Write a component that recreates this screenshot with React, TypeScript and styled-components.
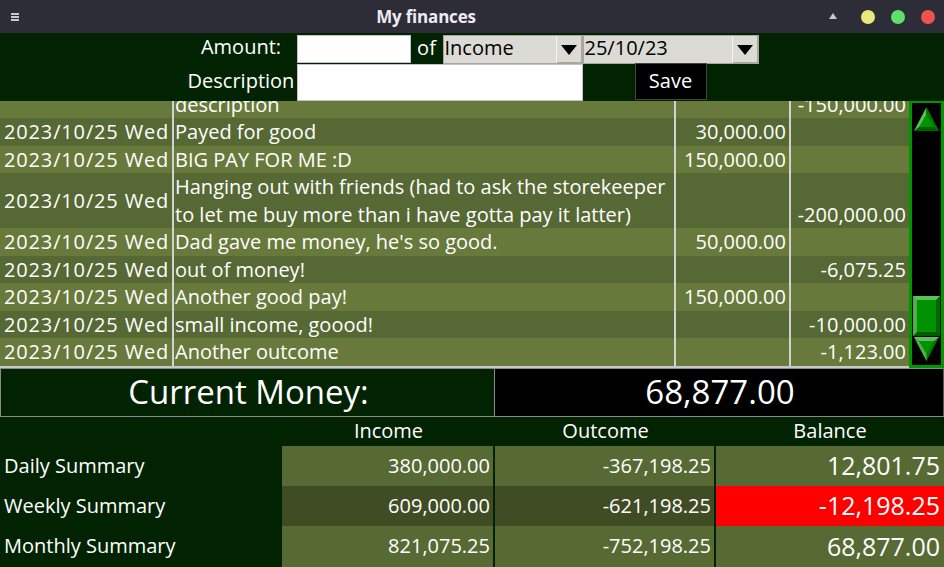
import styled, { createGlobalStyle } from 'styled-components';
import { useLayoutEffect, useRef } from 'react';

interface Entry {
	date: string;
	desc: string;
	income?: string;
	outcome?: string;
}

const entries: Entry[] = [
	{ date: '2023/10/25 Wed', desc: 'Paid the rent of the month, it was a lot so i add a long\ndescription', outcome: '-150,000.00' },
	{ date: '2023/10/25 Wed', desc: 'Payed for good', income: '30,000.00' },
	{ date: '2023/10/25 Wed', desc: 'BIG PAY FOR ME :D', income: '150,000.00' },
	{
		date: '2023/10/25 Wed',
		desc: 'Hanging out with friends (had to ask the storekeeper\nto let me buy more than i have gotta pay it latter)',
		outcome: '-200,000.00',
	},
	{ date: '2023/10/25 Wed', desc: "Dad gave me money, he's so good.", income: '50,000.00' },
	{ date: '2023/10/25 Wed', desc: 'out of money!', outcome: '-6,075.25' },
	{ date: '2023/10/25 Wed', desc: 'Another good pay!', income: '150,000.00' },
	{ date: '2023/10/25 Wed', desc: 'small income, goood!', outcome: '-10,000.00' },
	{ date: '2023/10/25 Wed', desc: 'Another outcome', outcome: '-1,123.00' },
];

const summary = [
	{ label: 'Daily Summary', income: '380,000.00', outcome: '-367,198.25', balance: '12,801.75', dark: false, negative: false },
	{ label: 'Weekly Summary', income: '609,000.00', outcome: '-621,198.25', balance: '-12,198.25', dark: true, negative: true },
	{ label: 'Monthly Summary', income: '821,075.25', outcome: '-752,198.25', balance: '68,877.00', dark: false, negative: false },
];

export default function App() {
	const listRef = useRef<HTMLDivElement>(null);

	useLayoutEffect(() => {
		if (listRef.current) listRef.current.scrollTop = 39;
	}, []);

	return (
		<>
			<GlobalStyle />
			<Window>
				<TitleBar>
					<MenuIcon width="8" height="8" viewBox="0 0 8 8">
						<rect x="0" y="0" width="8" height="2" fill="#c8c8cc" />
						<rect x="0" y="3" width="8" height="2" fill="#c8c8cc" />
						<rect x="0" y="6" width="8" height="2" fill="#c8c8cc" />
					</MenuIcon>
					<Title>My finances</Title>
					<TitleControls>
						<svg width="8" height="6" viewBox="0 0 8 6">
							<polygon points="4,0 8,6 0,6" fill="#c8c8cc" />
						</svg>
						<Light color="#e8e87c" />
						<Light color="#5ee06c" />
						<Light color="#ef5350" />
					</TitleControls>
				</TitleBar>

				<Form>
					<Label>Amount:</Label>
					<TextInput />
					<Of>of</Of>
					<Combo>
						<ComboText>Income</ComboText>
						<ComboArrow>
							<svg width="16" height="10" viewBox="0 0 16 10">
								<polygon points="0,0 16,0 8,10" fill="#000" />
							</svg>
						</ComboArrow>
					</Combo>
					<Combo>
						<ComboText>25/10/23</ComboText>
						<ComboArrow>
							<svg width="16" height="10" viewBox="0 0 16 10">
								<polygon points="0,0 16,0 8,10" fill="#000" />
							</svg>
						</ComboArrow>
					</Combo>
					<DescLabel>Description</DescLabel>
					<DescInput />
					<SaveCell>
						<SaveButton>Save</SaveButton>
					</SaveCell>
				</Form>

				<TableArea>
					<List ref={listRef}>
						{entries.map((e, i) => (
							<Row key={i} light={i % 2 === 0}>
								<DateCell>{e.date}</DateCell>
								<DescCell>{e.desc}</DescCell>
								<AmountCell>{e.income}</AmountCell>
								<AmountCell>{e.outcome}</AmountCell>
							</Row>
						))}
					</List>
					<ScrollBar>
						<svg width="27" height="26" viewBox="0 0 27 26">
							<polygon points="13.5,1 1,25 13.5,19" fill="#5cc05c" />
							<polygon points="13.5,1 26,25 13.5,19" fill="#007a00" />
							<polygon points="13.5,8 6,21 21,21" fill="#009400" />
							<polygon points="1,25 26,25 21,21 6,21" fill="#006000" />
						</svg>
						<Trough>
							<Thumb />
						</Trough>
						<svg width="27" height="26" viewBox="0 0 27 26">
							<polygon points="1,1 26,1 13.5,25" fill="#007a00" />
							<polygon points="1,1 26,1 21,5 6,5" fill="#5cc05c" />
							<polygon points="1,1 13.5,25 13.5,17 6,5" fill="#50b050" />
							<polygon points="6,5 21,5 13.5,18" fill="#009400" />
						</svg>
					</ScrollBar>
				</TableArea>

				<MoneyRow>
					<MoneyLabel>Current Money:</MoneyLabel>
					<MoneyValue>68,877.00</MoneyValue>
				</MoneyRow>

				<Summary>
					<span />
					<HeadCell>Income</HeadCell>
					<HeadCell>Outcome</HeadCell>
					<HeadCell>Balance</HeadCell>
					{summary.map((s) => (
						<SummaryLine key={s.label}>
							<SumLabel>{s.label}</SumLabel>
							<SumCell dark={s.dark}>{s.income}</SumCell>
							<SumCell dark={s.dark}>{s.outcome}</SumCell>
							<BalanceCell dark={s.dark} negative={s.negative}>
								{s.balance}
							</BalanceCell>
						</SummaryLine>
					))}
				</Summary>
			</Window>
		</>
	);
}

const GlobalStyle = createGlobalStyle`
	body {
		margin: 0;
		background: #012301;
		font-family: 'Open Sans', 'Noto Sans', sans-serif;
		color: #fff;
	}
	* {
		box-sizing: border-box;
	}
`;

const Window = styled.div`
	width: 944px;
	height: 567px;
	display: flex;
	flex-direction: column;
	background: #012301;
	overflow: hidden;
`;

const TitleBar = styled.header`
	height: 33px;
	flex: none;
	display: flex;
	align-items: center;
	padding: 0 9px 0 11px;
	background: #2d2d37;
`;

const MenuIcon = styled.svg`
	flex: none;
`;

const Title = styled.h1`
	flex: 1;
	margin: 0 0 0 4px;
	text-align: center;
	font-family: 'Liberation Sans Narrow', 'Open Sans', sans-serif;
	font-size: 17px;
	font-weight: 700;
	letter-spacing: -0.2px;
	color: #ececf0;
`;

const TitleControls = styled.div`
	display: flex;
	align-items: center;
	gap: 16px;
	svg {
		margin-right: 8px;
		margin-top: -2px;
	}
`;

const Light = styled.span<{ color: string }>`
	width: 14px;
	height: 14px;
	border-radius: 50%;
	background: ${({ color }) => color};
`;

const Form = styled.div`
	flex: none;
	height: 68px;
	display: grid;
	grid-template-columns: 113px 114px 32px 140px 176px;
	grid-template-rows: 31px 37px;
	justify-content: center;
	margin-left: -2px;
	font-size: 20px;
`;

const Label = styled.div`
	display: flex;
	align-items: center;
	justify-content: center;
	padding: 0 0 4px 2px;
	line-height: 1;
`;

const DescLabel = styled(Label)`
	padding: 0 0 3px 2px;
`;

const TextInput = styled.div`
	margin: 2px 0 1px;
	background: #fff;
	border: 1px solid #c4c4c4;
`;

const DescInput = styled(TextInput)`
	grid-column: 2 / 5;
	margin: 0;
`;

const Of = styled.div`
	display: flex;
	align-items: center;
	justify-content: center;
	padding-bottom: 3px;
`;

const Combo = styled.div`
	display: flex;
	margin-top: 2px;
	background: #dcdad5;
	border: 1px solid #a8a6a0;
	color: #000;
`;

const ComboText = styled.span`
	flex: 1;
	padding-left: 1px;
	line-height: 23px;
`;

const ComboArrow = styled.span`
	width: 26px;
	display: flex;
	align-items: center;
	justify-content: center;
	border-left: 1px solid #f4f3f0;
	box-shadow: inset -1px -1px 0 #aaa7a0;
`;

const SaveCell = styled.div`
	grid-column: 5;
	display: flex;
	justify-content: center;
`;

const SaveButton = styled.button`
	width: 72px;
	height: 37px;
	margin-top: -1px;
	padding: 0 0 3px;
	background: #000;
	color: #fff;
	border: 1px solid #444;
	font-family: inherit;
	font-size: 20px;
`;

const TableArea = styled.section`
	flex: none;
	height: 267px;
	display: flex;
`;

const List = styled.div`
	width: 909px;
	overflow: hidden;
	border-bottom: 2px solid #c8c8c8;
	font-size: 20px;
	line-height: 27.5px;
`;

const Row = styled.div<{ light: boolean }>`
	display: grid;
	grid-template-columns: 172px 502px 115px 1fr;
	background: ${({ light }) => (light ? '#687a3b' : '#566833')};
`;

const DateCell = styled.div`
	display: flex;
	align-items: center;
	padding-left: 4px;
	white-space: nowrap;
	letter-spacing: 0.85px;
`;

const DescCell = styled.div`
	padding-left: 1px;
	border-left: 2px solid #d2d2d2;
	white-space: pre-line;
`;

const AmountCell = styled.div`
	align-self: stretch;
	display: flex;
	align-items: flex-end;
	justify-content: flex-end;
	padding-right: 3px;
	border-left: 2px solid #d2d2d2;
`;

const ScrollBar = styled.div`
	width: 35px;
	display: flex;
	flex-direction: column;
	align-items: center;
	padding: 3px 0;
	background: #000;
	border: 3px solid #009600;
	border-top-width: 2px;
`;

const Trough = styled.div`
	flex: 1;
	width: 27px;
	display: flex;
	flex-direction: column;
	justify-content: flex-end;
`;

const Thumb = styled.div`
	height: 40px;
	background: #009200;
	border-top: 4px solid #5cc05c;
	border-left: 4px solid #4cb04c;
	border-right: 4px solid #006a00;
	border-bottom: 4px solid #005800;
`;

const MoneyRow = styled.div`
	flex: none;
	height: 48px;
	display: grid;
	grid-template-columns: 495px 1fr;
	font-size: 33px;
`;

const MoneyLabel = styled.div`
	display: flex;
	align-items: center;
	justify-content: center;
	border: 1px solid #8a8a8a;
	padding-bottom: 2px;
	padding-left: 2px;
`;

const MoneyValue = styled(MoneyLabel)`
	background: #000;
	border-left: none;
	border-right: 1px solid #5a5a5a;
`;

const Summary = styled.div`
	flex: 1;
	display: grid;
	grid-template-columns: 282px 213px 221px 1fr;
	grid-template-rows: 30px 40px 40px 1fr;
	font-size: 20px;
`;

const HeadCell = styled.div`
	display: flex;
	align-items: center;
	justify-content: center;
	padding-bottom: 2px;
`;

const SummaryLine = styled.div`
	display: contents;
`;

const SumLabel = styled.div`
	display: flex;
	align-items: center;
	padding: 0 0 2px 4px;
`;

const SumCell = styled.div<{ dark: boolean }>`
	display: flex;
	align-items: center;
	justify-content: flex-end;
	padding: 0 3px 2px 0;
	background: ${({ dark }) => (dark ? '#3f4c24' : '#576a33')};
	border-right: 2px solid #012301;
`;

const BalanceCell = styled(SumCell)<{ negative: boolean }>`
	font-size: 25px;
	padding-right: 4px;
	border-right: none;
	${({ negative }) => negative && `background: #ff0000;`};
`;
